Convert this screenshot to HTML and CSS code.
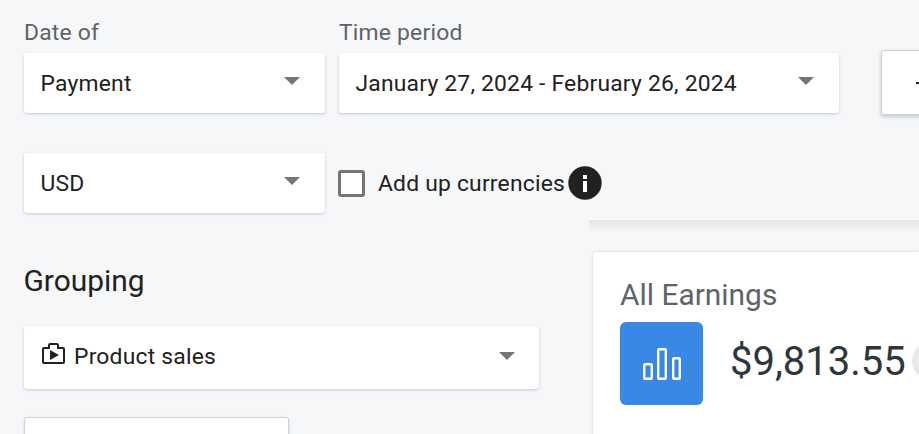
FILE: index.html
```html
<!DOCTYPE html>
<html lang="en">
<head>
<meta charset="utf-8">
<title>Earnings</title>
<link rel="stylesheet" href="styles.css">
</head>
<body>
<div class="page">
  <section class="filters">
    <div class="row row-top">
      <div class="field">
        <div class="label">Date of</div>
        <div class="select narrow"><span>Payment</span><i class="caret"></i></div>
      </div>
      <div class="field">
        <div class="label">Time period</div>
        <div class="select wide"><span>January 27, 2024 - February 26, 2024</span><i class="caret"></i></div>
      </div>
      <div class="action"><i class="action-glyph"></i></div>
    </div>
    <div class="row row-second">
      <div class="select narrow"><span>USD</span><i class="caret"></i></div>
      <label class="check"><i class="box"></i><span>Add up currencies</span></label>
      <svg class="info" viewBox="0 0 34 34" width="34" height="34" aria-hidden="true"><circle cx="17" cy="17" r="16.700" fill="#212121"/><rect x="15" y="15" width="4" height="11" fill="#fff"/><rect x="15" y="9" width="4" height="4" fill="#fff"/></svg>
    </div>
  </section>
  <div class="columns">
    <section class="left">
      <h2 class="heading">Grouping</h2>
      <div class="select group">
        <span class="group-value">
          <svg class="bag" viewBox="0 0 23 21" width="23" height="21" aria-hidden="true"><path d="M7 5V2.200C7 1.500 7.500 1 8.200 1h6.600C15.500 1 16 1.500 16 2.200V5h5c.6 0 1 .4 1 1v13c0 .6-.4 1-1 1H2c-.6 0-1-.4-1-1V6c0-.6.4-1 1-1z" fill="none" stroke="#212121" stroke-width="2"/><path d="M8 7v10l9-5z" fill="#212121"/></svg>
          <span>Product sales</span>
        </span>
        <i class="caret"></i>
      </div>
      <div class="stub"></div>
    </section>
    <section class="right">
      <div class="divider"></div>
      <div class="card">
        <div class="card-title">All Earnings</div>
        <div class="metric">
          <div class="tile">
            <svg viewBox="0 0 38 32" width="38" height="32" aria-hidden="true"><g fill="none" stroke="#fff" stroke-width="2.400"><rect x="1.200" y="16.200" width="7.600" height="14.600" rx="1"/><rect x="15.200" y="1.200" width="7.600" height="29.600" rx="1"/><rect x="30.200" y="10.200" width="6.600" height="20.600" rx="1"/></g></svg>
          </div>
          <div class="amount">$9,813.55</div>
          <div class="chip"></div>
        </div>
      </div>
    </section>
  </div>
</div>
</body>
</html>
```

FILE: styles.css
```css
* { box-sizing: border-box; }
html, body { margin: 0; height: 100%; }
body {
  background: #f6f7f9;
  color: #212121;
  font-family: Roboto, "Liberation Sans", sans-serif;
  font-size: 22.857px;
  letter-spacing: .00938em;
  overflow: hidden;
}
.page { width: 919px; height: 434px; overflow: hidden; padding: 18px 0 0 24px; }
.row { display: flex; }
.row-top { gap: 14px; height: 135px; }
.row-second { align-items: center; height: 60px; }
.field { display: flex; flex-direction: column; }
.label { color: #5f6368; line-height: 29px; height: 35px; }
.select {
  display: flex;
  align-items: center;
  justify-content: space-between;
  height: 60px;
  padding: 0 25px 0 16.500px;
  background: #fff;
  border-radius: 3px;
  box-shadow: 0 1px 3px rgba(60, 80, 110, .28);
}
.narrow { width: 301px; }
.wide { width: 500px; }
.caret {
  width: 0;
  height: 0;
  border-left: 8.500px solid transparent;
  border-right: 8.500px solid transparent;
  border-top: 8.500px solid #757575;
  margin-top: -4px;
}
.action {
  display: flex;
  align-items: center;
  width: 60px;
  height: 65px;
  margin: 32px 0 0 28px;
  padding-left: 34px;
  background: #fff;
  border: 1px solid #c9d3e0;
  border-radius: 3px;
  box-shadow: 0 2px 4px rgba(0, 0, 0, .2);
}
.action-glyph { width: 16px; height: 2px; background: #212121; flex: none; }
.check { display: flex; align-items: center; margin-left: 13px; }
.box {
  width: 27px;
  height: 27px;
  border: 3px solid #757575;
  border-radius: 3px;
  margin-right: 13px;
  background: #fff;
}
.info { margin-left: 3px; }
.columns { display: flex; }
.left { width: 565px; }
.heading { margin: 50px 0 0 -.5px; font-size: 29.900px; font-weight: 400; line-height: 36px; letter-spacing: 0; }
.group { width: 515px; height: 63px; margin-top: 27px; padding-right: 24px; padding-left: 18px; }
.group-value { display: flex; align-items: center; gap: 9px; margin-top: -2px; }
.bag { margin-top: -7px; }
.stub {
  width: 265px;
  height: 60px;
  margin-top: 28px;
  background: #fff;
  border: 1px solid #c9d3e0;
  border-radius: 3px;
  box-shadow: 0 1px 3px rgba(60, 80, 110, .2);
}
.right { flex: 1; margin-top: 7px; min-width: 0; }
.divider {
  height: 12px;
  background: linear-gradient(#e4e5e7, #f6f7f9);
}
.card {
  margin: 20px 0 0 4px;
  height: 240px;
  padding: 27px 0 0 27px;
  background: #fff;
  border-radius: 3px 0 0 0;
  box-shadow: 0 0 3px rgba(0, 0, 0, .18);
}
.card-title { color: #5f6368; font-size: 29.900px; line-height: 32px; height: 43px; letter-spacing: 0; }
.metric { display: flex; align-items: center; }
.tile {
  display: flex;
  align-items: center;
  justify-content: center;
  width: 83px;
  height: 83px;
  background: #3a88e5;
  border-radius: 6px;
  flex: none;
}
.amount { margin: -4px 0 0 27px; color: #2f353d; font-size: 40px; line-height: 83px; white-space: nowrap; letter-spacing: 0; }
.chip { width: 40px; height: 40px; margin: -6px 0 0 6px; background: #e9e9e9; border-radius: 50%; flex: none; }
```
